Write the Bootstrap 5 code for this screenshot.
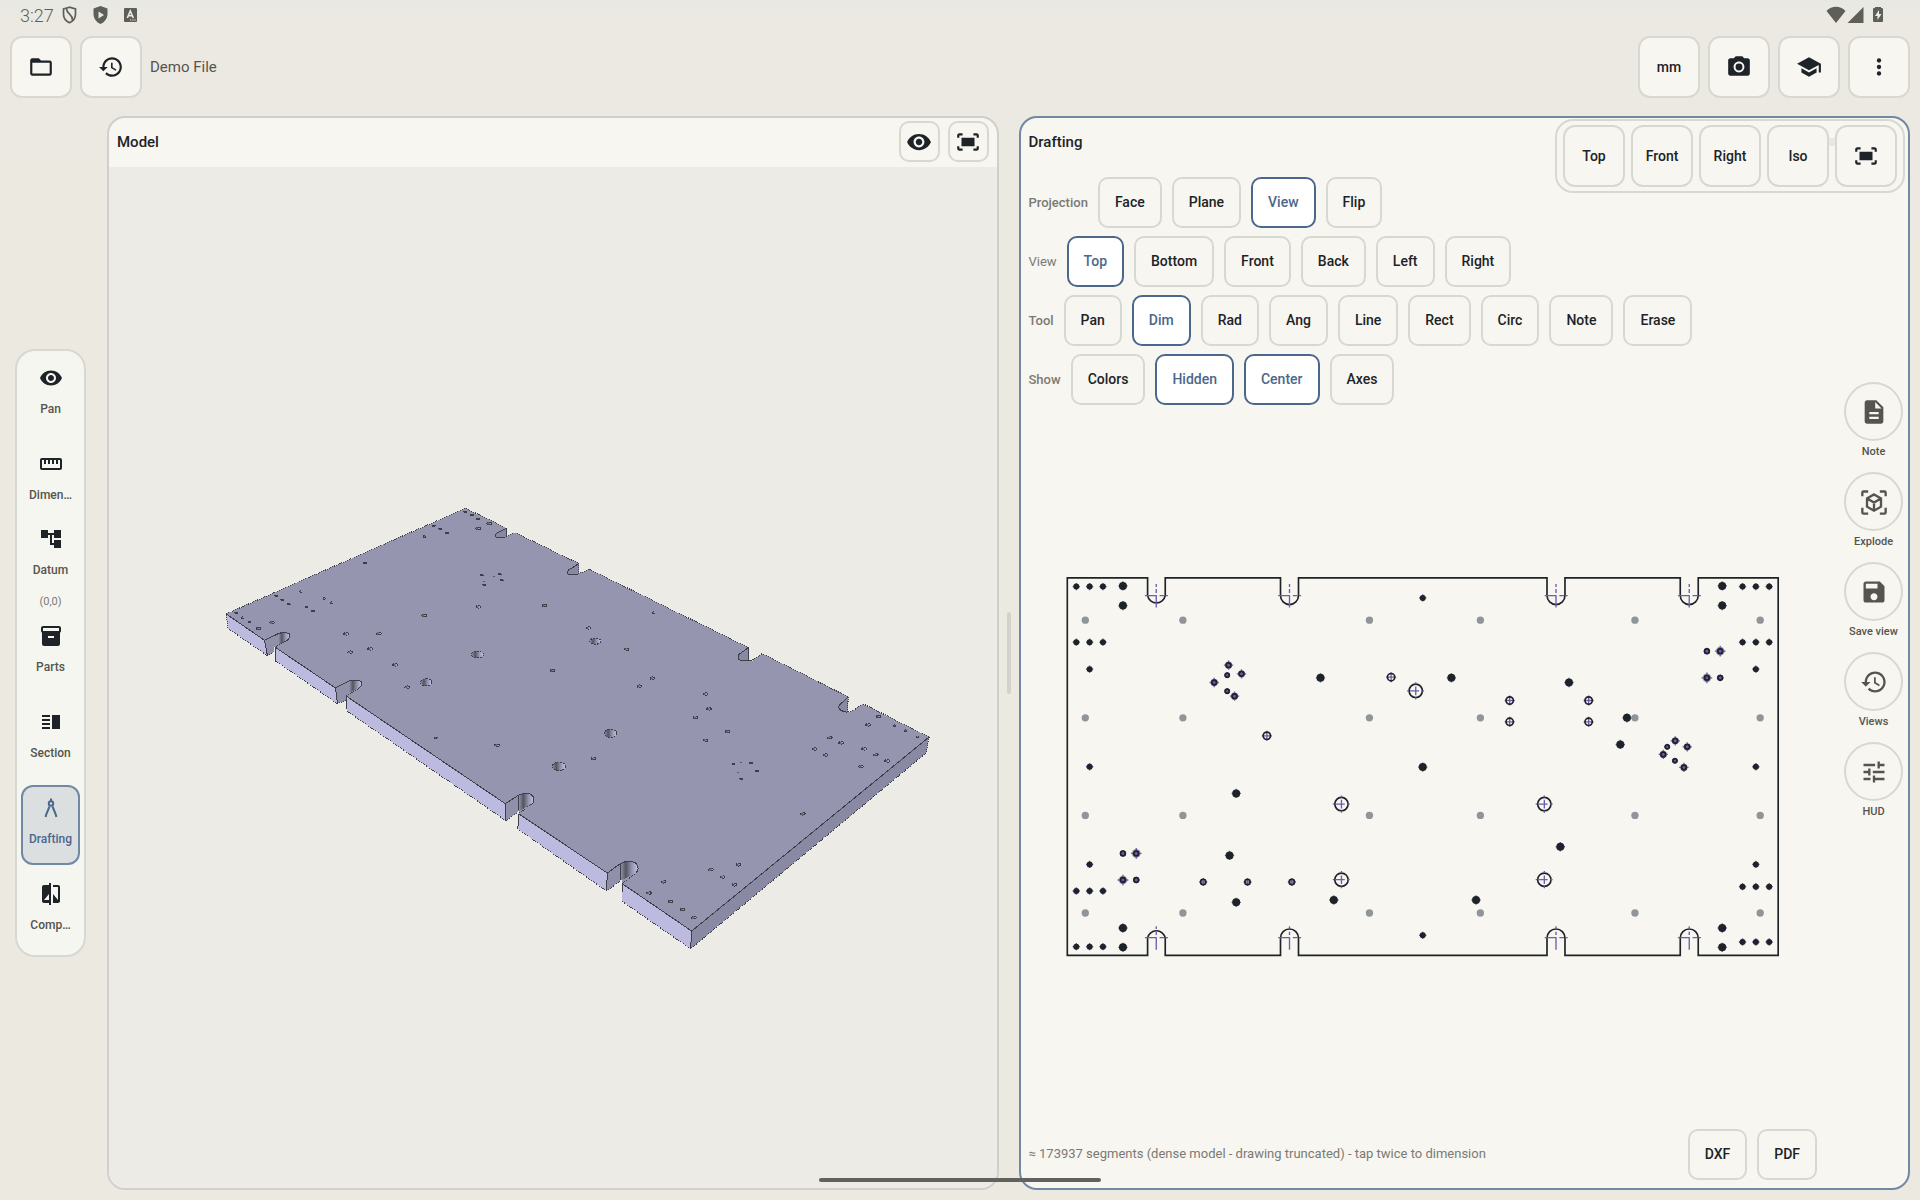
<!DOCTYPE html>
<html lang="en">
<head>
<meta charset="utf-8">
<meta name="viewport" content="width=device-width, initial-scale=1">
<title>Demo File – Drafting</title>
<link href="https://cdn.jsdelivr.net/npm/bootstrap@5.3.0/dist/css/bootstrap.min.css" rel="stylesheet">
<style>
  :root { --ink:#1d2327; --line:#d8d8d3; --accent:#4b678b; --paper:#f7f6f1; --soft:#55554e; --dim:#7b7a74; }
  body { font-family: Roboto, "Noto Sans", sans-serif; color: var(--ink); background: linear-gradient(#e8e8e3, #ece9e2 24px, #ece9e1); overflow: hidden; }
  svg { display: block; flex: none; }
  .ico { fill: currentColor; }
  .i24 { width: 24px; height: 24px; }
  .i26 { width: 26px; height: 26px; }
  .i28 { width: 28px; height: 28px; }
  .statusbar { height: 36px; padding: 0 36px 6px 20px; color: #5f5f5a; font-size: 18px; font-weight: 300; }
  .topbar { padding: 0 10px; }
  .filename { font-size: 15px; color: var(--soft); }
  .tile { width: 62px; height: 62px; padding: 0; border: 2px solid var(--line); border-radius: 12px; background: var(--paper); color: var(--ink); font-size: 14px; font-weight: 500; display: flex; align-items: center; justify-content: center; }
  .tile-sm { width: 41px; height: 41px; border-radius: 10px; }
  .workspace { padding: 18px 10px 11px 15px; }
  .rail { width: 71px; margin-right: 21px; padding: 4px; border: 2px solid var(--line); border-radius: 20px; background: #f5f6ef; gap: 6px; }
  .rail-item { height: 80px; padding: 9px 0 0; border: 2px solid transparent; border-radius: 12px; background: none; font-size: 12px; font-weight: 500; line-height: 16px; color: var(--soft); gap: 11px; display: flex; flex-direction: column; align-items: center; }
  .rail-item svg { color: var(--ink); }
  .rail-item.plain { padding-top: 0; border: 0; }
  .rail-item.active { background: #dbdfe0; border-color: #7189a5; color: var(--accent); }
  .rail-item.active svg { color: var(--accent); }
  .coord { font-size: 11px; font-weight: 400; color: var(--dim); margin-top: 5px; }
  .pane { flex: 1 1 0; min-width: 0; border: 2px solid #cfd0cc; border-radius: 18px; background: var(--paper); position: relative; overflow: hidden; }
  .pane-active { border-color: #7189a5; }
  .pane-head { height: 49px; padding: 3px 8px 5px; }
  .pane-title { font-size: 15px; font-weight: 500; margin: 0; line-height: 20px; }
  .stage { background: #ecebe6; }
  .splitter { width: 20px; }
  .splitter span { width: 4px; height: 82px; border-radius: 2px; background: #d3d1cb; }
  .sheet { flex: 1 1 0; min-width: 0; }
  .opts { padding: 10px 0 0 8px; gap: 8px; }
  .opt-row { gap: 10px; }
  .opt-label { font-size: 13px; font-weight: 500; color: var(--dim); }
  .opt { height: 51px; padding: 0 15px; border: 2px solid var(--line); border-radius: 10px; background: var(--paper); color: var(--ink); font-size: 14px; font-weight: 500; }
  .opt.active { background: #fff; border-color: var(--accent); color: var(--accent); }
  .views { position: absolute; top: 1px; right: 3px; padding: 4px 6px; gap: 6px; border: 2px solid var(--line); border-radius: 18px; background: rgba(247,246,241,.9); }
  .views .peek { position: absolute; right: 68px; top: 17px; width: 6px; height: 8px; background: #e7e8e2; }
  .tools { width: 91px; padding: 264px 5px 0 0; gap: 10px; }
  .tool { width: 59px; border: 0; background: none; padding: 0; font-size: 11px; font-weight: 500; line-height: 20px; color: var(--soft); display: flex; flex-direction: column; align-items: center; white-space: nowrap; gap: 1px; }
  .tool-ring { width: 59px; height: 59px; border: 2px solid var(--line); border-radius: 50%; display: flex; align-items: center; justify-content: center; }
  .foot { padding: 0 0 8px 8px; gap: 10px; }
  .foot-note { font-size: 13px; color: var(--dim); }
  .homebar { position: fixed; left: 50%; bottom: 18px; width: 282px; height: 4px; margin-left: -141px; border-radius: 2px; background: #61615d; }
  .cut { fill: none; stroke: #3e4049; stroke-width: 3; }
  .cut-dot { fill: none; stroke: #3e4049; stroke-width: 3; stroke-dasharray: 3 3; }
  .front { fill: #bcbbdf; } .topface { fill: #9695b0; } .shade { fill: #8a89a3; }
</style>
<script src="https://cdn.jsdelivr.net/npm/bootstrap@5.3.0/dist/js/bootstrap.bundle.min.js"></script>
</head>
<body class="vh-100 d-flex flex-column">

<svg width="0" height="0" class="position-absolute" aria-hidden="true">
  <symbol id="eye" viewBox="0 0 24 24"><path d="M12 4.500C7 4.500 2.730 7.610 1 12c1.730 4.390 6 7.500 11 7.500s9.270-3.110 11-7.500c-1.730-4.390-6-7.500-11-7.500zM12 17c-2.760 0-5-2.240-5-5s2.240-5 5-5 5 2.240 5 5-2.240 5-5 5zm0-8c-1.660 0-3 1.340-3 3s1.340 3 3 3 3-1.340 3-3-1.340-3-3-3z"/></symbol>
  <symbol id="fit" viewBox="0 0 24 24"><path d="M17 4h3c1.100 0 2 .9 2 2v2h-2V6h-3V4zM4 8V6h3V4H4c-1.100 0-2 .9-2 2v2h2zm16 8v2h-3v2h3c1.100 0 2-.9 2-2v-2h-2zM7 18H4v-2H2v2c0 1.100.9 2 2 2h3v-2zM18 8H6v8h12V8z"/></symbol>
  <symbol id="history" viewBox="0 0 24 24"><path d="M13 3c-4.970 0-9 4.030-9 9H1l3.890 3.890.07.14L9 12H6c0-3.870 3.130-7 7-7s7 3.130 7 7-3.130 7-7 7c-1.930 0-3.680-.79-4.940-2.060l-1.420 1.420C8.270 19.990 10.510 21 13 21c4.970 0 9-4.030 9-9s-4.030-9-9-9zm-1 5v5l4.280 2.540.72-1.210-3.500-2.080V8H12z"/></symbol>
</svg>

<header>
  <div class="statusbar d-flex align-items-center">
    <span>3:27</span>
    <svg class="ms-2" width="15" height="18" viewBox="0 0 15 18" fill="none" stroke="currentColor" stroke-width="1.700"><path d="M7.500 1.200 1.500 3v5c0 4 2.500 7.200 6 8.800 3.500-1.600 6-4.800 6-8.800V3z"/><path d="M4.500 2.500c0 5.500 6 5.500 6 11.500"/></svg>
    <svg class="ms-3" width="15" height="18" viewBox="0 0 15 18" fill="currentColor"><path fill-rule="evenodd" d="M7.500 0 .5 2.500V8c0 4.500 3 8.400 7 10 4-1.600 7-5.500 7-10V2.500zM5.500 5.500 11 9l-5.500 3.500z"/></svg>
    <svg class="ms-3" width="13" height="14" viewBox="0 0 13 14"><rect width="13" height="14" rx="1" fill="currentColor"/><path d="m3.300 10 3-7 3 7M4.500 7.800h3.800" fill="none" stroke="#ecebe5" stroke-width="1.600"/><path d="M6 12h1.200M8.300 12h1.200M10.500 12h1.200" stroke="#ecebe5" stroke-width="1.200"/></svg>
    <svg class="ms-auto" width="46" height="18" viewBox="0 0 46 18" fill="currentColor"><path d="M10 17 .5 5C6-.6 14-.6 19.500 5zM37.500 1v16H21.500z"/></svg>
    <svg width="12" height="16" viewBox="0 0 12 16"><path fill="currentColor" d="M2 1h1V0h6v1h1c1 0 1 1 1 1v12c0 1-1 1-1 1H2c-1 0-1-1-1-1V2s0-1 1-1z"/><path fill="#ecebe5" d="M7 3 3 9h2.500v4L9.500 7H7z"/></svg>
  </div>
  <nav class="topbar d-flex align-items-center gap-2" aria-label="File">
    <button class="tile" aria-label="Open"><svg class="ico i26" viewBox="0 0 24 24"><path d="M20 6h-8l-2-2H4c-1.100 0-1.990.9-1.990 2L2 18c0 1.100.9 2 2 2h16c1.100 0 2-.9 2-2V8c0-1.100-.9-2-2-2zm0 12H4V8h16v10z"/></svg></button>
    <button class="tile" aria-label="History"><svg class="ico i26"><use href="#history"/></svg></button>
    <span class="filename me-auto">Demo File</span>
    <button class="tile">mm</button>
    <button class="tile" aria-label="Screenshot"><svg class="ico i26" viewBox="0 0 24 24"><circle cx="12" cy="12" r="3.200"/><path d="M9 2 7.170 4H4c-1.100 0-2 .9-2 2v12c0 1.100.9 2 2 2h16c1.100 0 2-.9 2-2V6c0-1.100-.9-2-2-2h-3.170L15 2H9zm3 15c-2.760 0-5-2.240-5-5s2.240-5 5-5 5 2.240 5 5-2.240 5-5 5z"/></svg></button>
    <button class="tile" aria-label="Learn"><svg class="ico i26" viewBox="0 0 24 24"><path d="M5 13.180v4L12 21l7-3.820v-4L12 17l-7-3.820zM12 3 1 9l11 6 9-4.910V17h2V9L12 3z"/></svg></button>
    <button class="tile" aria-label="More"><svg class="ico i26" viewBox="0 0 24 24"><circle cx="12" cy="6" r="2"/><circle cx="12" cy="12" r="2"/><circle cx="12" cy="18" r="2"/></svg></button>
  </nav>
</header>

<main class="workspace d-flex flex-grow-1">
  <nav class="rail d-flex flex-column align-self-center flex-shrink-0" aria-label="Tools">
    <button class="rail-item"><svg class="ico i24"><use href="#eye"/></svg>Pan</button>
    <button class="rail-item"><svg class="ico i24" viewBox="0 0 24 24"><path d="M21 6H3c-1.100 0-2 .9-2 2v8c0 1.100.9 2 2 2h18c1.100 0 2-.9 2-2V8c0-1.100-.9-2-2-2zm0 10H3V8h2v4h2V8h2v4h2V8h2v4h2V8h2v4h2V8h2v8z"/></svg>Dimen…</button>
    <button class="rail-item plain"><svg class="ico i24" viewBox="0 0 24 24"><path d="M22 11V3h-7v3H9V3H2v8h7V8h2v10h4v3h7v-8h-7v3h-2V8h2v3h7z"/></svg>Datum<span class="coord">(0,0)</span></button>
    <button class="rail-item"><svg class="ico i24" viewBox="0 0 24 24"><path d="M20 2H4c-1 0-2 .9-2 2v3.010c0 .72.43 1.340 1 1.690V20c0 1.100 1.100 2 2 2h14c.9 0 2-.9 2-2V8.700c.57-.35 1-.97 1-1.690V4c0-1.100-1-2-2-2zm-5 12H9v-2h6v2zm5-7H4V4h16v3z"/></svg>Parts</button>
    <button class="rail-item"><svg class="ico i24" viewBox="0 0 24 24"><path d="M3 15h8v-2H3v2zm0 4h8v-2H3v2zm0-8h8V9H3v2zm0-6v2h8V5H3zm10 0h8v14h-8V5z"/></svg>Section</button>
    <button class="rail-item active"><svg class="i24" viewBox="0 0 24 24" fill="none" stroke="currentColor" stroke-width="2"><circle cx="12" cy="7.500" r="2.200"/><path d="M12 2.500V5M10.500 10.500 7.200 18.500 6.600 21M13.500 10.500l3.300 8 .6 2.500"/></svg>Drafting</button>
    <button class="rail-item"><svg class="ico i24" viewBox="0 0 24 24"><path d="M10 3H5c-1.100 0-2 .9-2 2v14c0 1.100.9 2 2 2h5v2h2V1h-2v2zm0 15H5l5-6v6zm9-15h-5v2h5v13l-5-6v9h5c1.100 0 2-.9 2-2V5c0-1.100-.9-2-2-2z"/></svg>Comp…</button>
  </nav>

  <section class="pane d-flex flex-column">
    <div class="pane-head d-flex align-items-center gap-2">
      <h2 class="pane-title me-auto">Model</h2>
      <button class="tile tile-sm" aria-label="Visibility"><svg class="ico i26"><use href="#eye"/></svg></button>
      <button class="tile tile-sm" aria-label="Fit"><svg class="ico i26"><use href="#fit"/></svg></button>
    </div>
    <div class="stage flex-grow-1 d-flex overflow-hidden">
      <svg class="w-100 h-100" viewBox="109 167 887 1020" role="img" aria-label="Plate model">
        <defs><linearGradient id="bore"><stop offset="0" stop-color="#9392ad"/><stop offset=".3" stop-color="#55555f"/><stop offset=".6" stop-color="#8f8eab"/><stop offset="1" stop-color="#c6c5ea"/></linearGradient></defs>
        <g transform="translate(210 490) scale(.33333)" shape-rendering="crispEdges">
          <path class="topface" d="M48 371 766 54 889 114V140L914 127 1106 220V250L1137 237 1615 472V512H1625L1655 490 1914 620 1912 666 1930 660 1957 640 2156 740 1444 1322 1236 1180 1231 1119 1191 1148 925 970 926 914 885 940 408 617V590L376 593 194 470 205 440 163 450z"/>
          <path class="front" d="M48 371 163 450 172 496 54 415zM194 470 376 593 382 640 196 512zM408 617 885 940 887 991 410 662zM925 970 1191 1148 1189 1202 923 1016zM1236 1180 1444 1322 1441 1375 1234 1232z"/>
          <path class="shade" d="M1444 1322 2156 740 2147 788 1441 1375zM889 114 858 130Q850 143 870 143L889 142zM1106 220 1074 240Q1066 254 1085 254L1106 252zM1615 472 1586 492Q1578 512 1600 512L1613 512zM1914 620 1887 644Q1878 660 1910 666z"/>
          <path fill="#9190aa" d="M163 450 205 430V464L192 471 190 488 172 496zM376 593 417 572V604L408 612V630L382 640zM885 940 926 914V962L887 991zM1191 1148 1231 1119V1170L1189 1202z"/>
          <path fill="url(#bore)" d="M205 430Q222 424 237 430 242 443 231 450L205 465z"/>
          <path fill="url(#bore)" d="M417 572Q440 567 453 573 458 585 447 593L418 607z"/>
          <path fill="url(#bore)" d="M926 914Q945 906 962 912 976 922 968 938L926 963z"/>
          <path fill="url(#bore)" d="M1231 1119Q1255 1108 1276 1118 1290 1132 1278 1147L1233 1170z"/>
          <path class="cut" d="M48 371 163 450 205 430Q222 424 237 430 242 443 231 450M194 470 376 593 417 572Q440 567 453 573 458 585 447 593M408 617 885 940 926 914Q945 906 962 912 976 922 968 938M925 970 1191 1148 1231 1119Q1255 1108 1276 1118 1290 1132 1278 1147M1236 1180 1444 1322 2156 740M163 450 172 496M376 593 382 640M885 940 887 991M1191 1148 1189 1202M1444 1322 1441 1375M196 470V512M409 617V655M925 970 923 1016M1236 1180V1205M926 914V960M1231 1119V1170M889 114V140M1615 472V512M889 114 858 130Q850 143 870 143H885M1106 220 1074 240Q1066 254 1085 254H1102M1615 472 1586 492Q1578 512 1600 512H1622M1914 620 1887 644Q1878 660 1910 666"/>
          <path class="cut-dot" d="M48 371 766 54 889 114M889 140 914 127 1106 220V250L1137 237 1615 472M1622 512 1655 490 1914 620 1910 666 1930 660 1957 640 2156 740 2147 788 1441 1375 1234 1232M1189 1202 923 1016M887 991 410 662M382 640 196 512M172 496 54 415 48 371M172 496 190 488M382 640 408 630M887 991 922 967M1189 1202 1232 1170M231 450 194 470M447 593 408 617M968 938 925 970M1278 1147 1236 1180"/>
          <g id="bores"></g>
        </g>
      </svg>
    </div>
  </section>

  <div class="splitter d-flex align-items-center justify-content-center flex-shrink-0"><span></span></div>

  <section class="pane pane-active d-flex">
    <div class="sheet d-flex flex-column">
      <div class="pane-head d-flex align-items-center"><h2 class="pane-title">Drafting</h2></div>
      <div class="opts d-flex flex-column">
        <div class="opt-row d-flex align-items-center"><span class="opt-label">Projection</span><button class="opt">Face</button><button class="opt">Plane</button><button class="opt active">View</button><button class="opt">Flip</button></div>
        <div class="opt-row d-flex align-items-center"><span class="opt-label fw-normal">View</span><button class="opt active">Top</button><button class="opt">Bottom</button><button class="opt">Front</button><button class="opt">Back</button><button class="opt">Left</button><button class="opt">Right</button></div>
        <div class="opt-row d-flex align-items-center"><span class="opt-label">Tool</span><button class="opt">Pan</button><button class="opt active">Dim</button><button class="opt">Rad</button><button class="opt">Ang</button><button class="opt">Line</button><button class="opt">Rect</button><button class="opt">Circ</button><button class="opt">Note</button><button class="opt">Erase</button></div>
        <div class="opt-row d-flex align-items-center"><span class="opt-label">Show</span><button class="opt">Colors</button><button class="opt active">Hidden</button><button class="opt active">Center</button><button class="opt">Axes</button></div>
      </div>
      <div class="flex-grow-1 d-flex overflow-hidden ps-2">
        <svg class="w-100 h-100" viewBox="1029 405 789 724" role="img" aria-label="Top view drawing">
          <g id="plan" transform="translate(1050 560) scale(.33333)" fill="none" stroke-width="4">
            <path stroke="#1d2327" stroke-width="5" d="M52 54H293V107A27 27 0 0 0 346 107V54H692V107A27 27 0 0 0 746 107V54H1492V107A27 27 0 0 0 1546 107V54H1892V107A27 27 0 0 0 1946 107V54H2186V1187H1946V1135A27 27 0 0 0 1892 1135V1187H1546V1135A27 27 0 0 0 1492 1135V1187H746V1135A27 27 0 0 0 692 1135V1187H346V1135A27 27 0 0 0 293 1135V1187H52z"/>
          </g>
        </svg>
      </div>
      <div class="foot d-flex align-items-center">
        <span class="foot-note me-auto">≈ 173937 segments (dense model - drawing truncated) - tap twice to dimension</span>
        <button class="opt">DXF</button><button class="opt">PDF</button>
      </div>
    </div>
    <div class="tools d-flex flex-column align-items-end flex-shrink-0">
      <button class="tool"><span class="tool-ring"><svg class="ico i28" viewBox="0 0 24 24"><path d="M14 2H6c-1.100 0-1.990.9-1.990 2L4 20c0 1.100.89 2 1.990 2H18c1.100 0 2-.9 2-2V8l-6-6zm2 16H8v-2h8v2zm0-4H8v-2h8v2zm-3-5V3.500L18.500 9H13z"/></svg></span>Note</button>
      <button class="tool"><span class="tool-ring"><svg class="i28" viewBox="0 0 24 24" fill="none" stroke="currentColor" stroke-width="2"><path d="M2 7V4q0-1 1-1h4M17 3h4q1 0 1 1v3M22 17v4q0 1-1 1h-4M7 22H3q-1 0-1-1v-4M12 5.500l6 3.500v7l-6 3.500L6 16V9zM6.500 9.200 12 12.500l5.500-3.300M12 12.500v6.500"/></svg></span>Explode</button>
      <button class="tool"><span class="tool-ring"><svg class="ico i28" viewBox="0 0 24 24"><path d="M17 3H5c-1.110 0-2 .9-2 2v14c0 1.100.89 2 2 2h14c1.100 0 2-.9 2-2V7l-4-4zm-5 16c-1.660 0-3-1.340-3-3s1.340-3 3-3 3 1.340 3 3-1.340 3-3 3zm3-10H5V5h10v4z"/></svg></span>Save view</button>
      <button class="tool"><span class="tool-ring"><svg class="ico i28"><use href="#history"/></svg></span>Views</button>
      <button class="tool"><span class="tool-ring"><svg class="ico i28" viewBox="0 0 24 24"><path d="M3 17v2h6v-2H3zM3 5v2h10V5H3zm10 16v-2h8v-2h-8v-2h-2v6h2zM7 9v2H3v2h4v2h2V9H7zm14 4v-2H11v2h10zm-6-4h2V7h4V5h-4V3h-2v6z"/></svg></span>HUD</button>
    </div>
    <div class="views d-flex">
      <span class="peek"></span>
      <button class="tile">Top</button><button class="tile">Front</button><button class="tile">Right</button><button class="tile">Iso</button>
      <button class="tile" aria-label="Fit"><svg class="ico i26"><use href="#fit"/></svg></button>
    </div>
  </section>
</main>
<div class="homebar"></div>

<script>
  const NS = 'http://www.w3.org/2000/svg';
  function add(parent, tag, attrs) {
    const el = document.createElementNS(NS, tag);
    for (const k in attrs) el.setAttribute(k, attrs[k]);
    parent.appendChild(el);
  }
  const INK = '#1d2327', VIO = '#6f5bb0', GREY = '#90959a';
  const plan = document.getElementById('plan');
  const line = d => add(plan, 'path', { d, stroke: VIO, 'stroke-width': 4 });
  const cross = (x, y, r) => line(`M${x - r} ${y}H${x + r}M${x} ${y - r}V${y + r}`);

  // slot centre marks
  for (const x of [319, 719, 1519, 1919]) {
    line(`M${x - 34} 107H${x}V143M${x + 10} 107h14m4 0h7M${x} 72v9m0 6v12`);
    line(`M${x - 34} 1134H${x}V1170M${x + 10} 1134h14m4 0h7M${x} 1100v8m0 8v10`);
  }
  // through holes seen solid
  const dot = (x, y, r) => { cross(x, y, r + 2); add(plan, 'circle', { cx: x, cy: y, r, fill: INK }); };
  for (const x of [79, 119, 159]) for (const y of [80, 247, 994, 1161]) dot(x, y, 9);
  for (const x of [2079, 2119, 2159]) for (const y of [80, 247, 981, 1147]) dot(x, y, 9);
  for (const x of [119, 2119]) for (const y of [328, 621, 914]) dot(x, y, 9);
  dot(1119, 114, 9); dot(1119, 1127, 9);
  for (const x of [219, 2018]) for (const y of [78, 137, 1105, 1163]) dot(x, y, 12);
  // hidden dowels
  for (const x of [106, 399, 959, 1292, 1756, 2132]) for (const y of [181, 474, 767, 1060]) add(plan, 'circle', { cx: x, cy: y, r: 11, fill: GREY });
  [[812,354],[1205,354],[1119,622],[559,701],[559,1028],[539,887],[852,1021],[1558,368],[1732,474],[1712,554],[1532,861],[1279,1021]].forEach(([x, y]) => dot(x, y, 12));
  const ring = (x, y, r, c) => { cross(x, y, c); add(plan, 'circle', { cx: x, cy: y, r, stroke: INK, 'stroke-width': 5 }); };
  [[1098,393],[875,733],[875,960],[1484,733],[1484,960]].forEach(([x, y]) => {
    add(plan, 'circle', { cx: x, cy: y, r: 20, stroke: INK, 'stroke-width': 5 });
    line(`M${x - 26} ${y}h5m4 0h27m8 0h7M${x} ${y - 26}v6m0 7v26m0 7v6`);
  });
  [[1024,352],[651,528],[1380,422],[1380,486],[1617,422],[1617,486]].forEach(([x, y]) => ring(x, y, 11, 15));
  [[460,967],[593,967],[726,967]].forEach(([x, y]) => ring(x, y, 8, 12));
  // tapped holes, with and without countersink
  const tap = (x, y, r, halo) => {
    if (halo) add(plan, 'circle', { cx: x, cy: y, r: halo, fill: GREY });
    add(plan, 'circle', { cx: x, cy: y, r, fill: VIO, stroke: INK });
    cross(x, y, (halo || r) + 3);
    add(plan, 'circle', { cx: x, cy: y, r, stroke: INK, 'stroke-width': 5 });
  };
  [[536,316],[575,342],[493,368],[554,409],[1877,543],[1913,561],[1841,584],[1903,623]].forEach(([x, y]) => tap(x, y, 7, 11));
  [[259,881],[219,961],[2012,274],[1972,354]].forEach(([x, y]) => tap(x, y, 7, 13));
  [[532,346],[532,394],[1853,561],[1876,603]].forEach(([x, y]) => tap(x, y, 6));
  [[219,881],[259,961],[1972,274],[2012,354]].forEach(([x, y]) => tap(x, y, 7));

  // bores on the solid model
  const bores = document.getElementById('bores');
  const bore = (x, y, rx, ry) => add(bores, 'ellipse', { cx: x, cy: y, rx, ry, fill: 'url(#bore)', stroke: '#3e4049', 'stroke-width': 3, 'stroke-dasharray': rx > 10 ? '6 3' : '9 3' });
  [765,66,785,75,804,86,670,107,690,117,711,128,643,139,464,218,272,304,198,318,216,330,236,342,342,325,365,337,289,350,309,362,78,369,98,382,118,396,
   814,255,868,252,874,270,822,284,677,742,1330,367,1568,820,1622,818,1640,842,1593,866,2053,706,2086,721,2120,739]
    .forEach((v, i, a) => { if (i % 2 === 0) bore(v, a[i + 1], 5, 2); });
  [837,100,804,115,145,415,186,397,804,350,642,376,1003,346,408,431,506,430,420,486,480,476,555,524,591,591,1027,541,1134,413,860,765,1150,805,
   1249,477,1326,564,1287,588,1485,611,1496,656,1456,682,1551,724,1486,750,1858,742,1892,758,1812,776,1845,794,1961,776,1996,793,2030,812,1952,829,1973,704,2004,679,
   1777,970,1502,1138,1584,1123,1537,1160,1572,1183,1360,1174,1316,1208,1380,1233,1416,1257,1451,1282]
    .forEach((v, i, a) => { if (i % 2 === 0) bore(v, a[i + 1], 7, 4); });
  [[802,493,18,10],[648,576,17,11],[1155,453,17,9],[1046,828,20,13],[1201,729,19,12]].forEach(b => bore(...b));
  [[820,274],[851,259],[1591,815],[1584,845]].forEach(([x, y]) => add(bores, 'rect', { x: x - 3, y: y - 1, width: 6, height: 3, fill: '#5a5a66' }));
</script>
</body>
</html>
